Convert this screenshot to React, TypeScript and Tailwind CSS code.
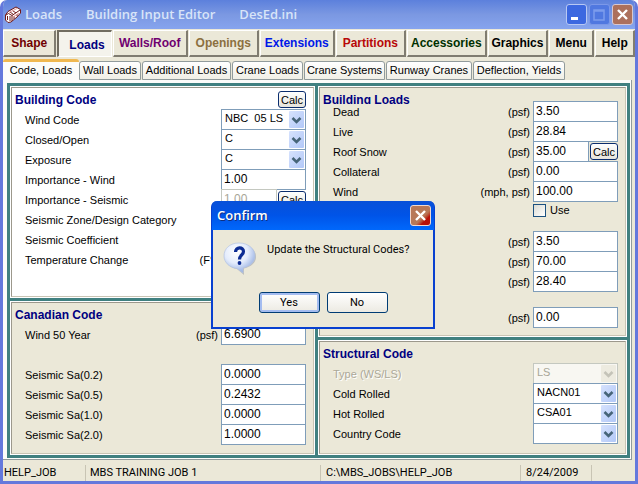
import { useId, type ReactNode } from "react";

const tools = [
  { name: "Shape", style: "basis-[54px] text-[#700000]" },
  { name: "Loads", style: "basis-[55px] text-[#000080]" },
  { name: "Walls/Roof", style: "basis-[76px] text-[#700070]" },
  { name: "Openings", style: "basis-[71px] text-[#8c7040]" },
  { name: "Extensions", style: "basis-[76px] text-[#0018e8]" },
  { name: "Partitions", style: "basis-[71px] text-[#b80808]" },
  { name: "Accessories", style: "basis-[81px] text-[#003000]" },
  { name: "Graphics", style: "basis-[61px] text-black" },
  { name: "Menu", style: "basis-[46px] text-black" },
  { name: "Help", style: "basis-[40px] text-black" },
];

const tabs = [
  { name: "Wall Loads", width: "w-[62px]" },
  { name: "Additional Loads", width: "w-[89px]" },
  { name: "Crane Loads", width: "w-[71px]" },
  { name: "Crane Systems", width: "w-[81px]" },
  { name: "Runway Cranes", width: "w-[86px]" },
  { name: "Deflection, Yields", width: "w-[92px]" },
];

function Chevron({ disabled = false }: { disabled?: boolean }) {
  return (
    <svg
      viewBox="0 0 15 17"
      className="pointer-events-none absolute top-[2px] right-[2px] h-[17px] w-[15px]"
    >
      <defs>
        <linearGradient id="arrowBlue" x1="0" y1="0" x2="1" y2="1">
          <stop offset="0" stopColor="#d6e2fd" />
          <stop offset="1" stopColor="#b2c8f8" />
        </linearGradient>
      </defs>
      <rect width="15" height="17" rx="1" fill={disabled ? "#edebe0" : "url(#arrowBlue)"} />
      <path
        d="M3.500 7 L7.500 11 L11.500 7"
        fill="none"
        stroke={disabled ? "#c4c3b8" : "#466478"}
        strokeWidth="2.6"
      />
    </svg>
  );
}

function CalcButton() {
  return (
    <button className="h-[17px] w-7 shrink-0 rounded-[3px] border border-[#0b2d6e] bg-linear-to-b from-white to-[#e6e4dc] leading-[14px]">
      Calc
    </button>
  );
}

type RowProps = {
  label?: string;
  unit?: string;
  value?: string;
  select?: boolean;
  disabled?: boolean;
  calc?: boolean;
};

function Row({ label, unit, value = "", select, disabled, calc }: RowProps) {
  const id = useId();
  const field = disabled
    ? "border-[#c4c8c0] text-[#a8a698]"
    : "border-[#7f9db9] bg-white text-black";
  return (
    <div className="flex h-5 items-start">
      <label
        htmlFor={id}
        className={`flex grow justify-between pt-[3px] pr-[3px] leading-4 whitespace-nowrap ${
          disabled && select ? "text-[#aca899] [text-shadow:1px_1px_0_#fff]" : ""
        }`}
      >
        <span>{label}</span>
        <span>{unit}</span>
      </label>
      <div className="relative flex h-[21px] w-[85px] shrink-0 items-start">
        {select ? (
          <>
            <select
              id={id}
              disabled={disabled}
              defaultValue={value}
              className={`h-[21px] w-full appearance-none border pb-[2px] pl-[3px] opacity-100 ${
                disabled ? "bg-[#f8f7f2]" : ""
              } ${field}`}
            >
              <option>{value}</option>
            </select>
            <Chevron disabled={disabled} />
          </>
        ) : (
          <input
            id={id}
            disabled={disabled}
            defaultValue={value}
            className={`h-[21px] min-w-0 grow border pb-[2px] pl-[2px] text-xs ${field}`}
          />
        )}
        {calc && (
          <div className="flex pt-[2px] pl-px">
            <CalcButton />
          </div>
        )}
      </div>
    </div>
  );
}

type PanelProps = { title: string; tone: string; clipped?: boolean; children: ReactNode };

function Panel({ title, tone, clipped, children }: PanelProps) {
  return (
    <section className={`border border-white ${tone}`}>
      <div className="h-full border border-t-[#9c988c] border-r-[#c8c4b4] border-b-[#c8c4b4] border-l-[#9c988c] pr-[7px] pl-[13px]">
        <h2
          className={`-ml-[10px] text-xs leading-6 font-bold text-[#000080] ${
            clipped ? "-mb-4 h-4 overflow-hidden" : "h-0"
          }`}
        >
          {title}
        </h2>
        {children}
      </div>
    </section>
  );
}

function TitleBar() {
  return (
    <header className="flex h-[29px] items-center bg-linear-to-b from-[#5c80dc] via-[#7b98e2] to-[#86a4ee] pr-[5px] pl-1">
      <svg viewBox="0 0 18 18" className="mr-[3px] h-[18px] w-[18px]">
        <path
          d="M1.500 9 L4 5.500 L12 1 L16.500 3.500 L16.500 7 L13 11 L7 16 L4 16.500 L1.500 14 Z"
          fill="#fff"
          stroke="#701818"
        />
        <path
          d="M2 9 L4.500 7.500 L8 9.500 L8 15 M8 9.500 L16 4 M6 6 L9.500 8.500 M8.500 4.500 L12 7 M3.500 10 L3.500 14 M6 10 L6 15 M10 10 L10 13 M13 8 L13 10"
          fill="none"
          stroke="#701818"
        />
        <path d="M5 6.500 L13 2.500 M9 11 L15 7" stroke="#e8a0a0" fill="none" />
      </svg>
      <h1 className="flex grow gap-6 font-['Open_Sans',sans-serif] text-[13px] font-semibold whitespace-nowrap text-[#d8e4f8]">
        <span>Loads</span>
        <span>Building Input Editor</span>
        <span>DesEd.ini</span>
      </h1>
      <div className="flex gap-[2px]">
        <button aria-label="Minimize" className="h-[21px] w-[21px] rounded-[3px] border border-[#b8c8f4] bg-[#3c68e0]">
          <svg viewBox="0 0 19 19">
            <rect x="4" y="12" width="7" height="3" fill="#fff" />
          </svg>
        </button>
        <button aria-label="Maximize" className="h-[21px] w-[21px] rounded-[3px] border border-[#7c98e8] bg-[#5078e0]">
          <svg viewBox="0 0 19 19">
            <path d="M4 5h10v10H4z M4 6h10" fill="none" stroke="#7c9cec" strokeWidth="1.5" />
          </svg>
        </button>
        <button aria-label="Close" className="h-[21px] w-[21px] rounded-[3px] border border-[#d8c8d0] bg-[#ac705c]">
          <svg viewBox="0 0 19 19">
            <path d="M5 5 L14 14 M14 5 L5 14" stroke="#fff" strokeWidth="2.4" />
          </svg>
        </button>
      </div>
    </header>
  );
}

function ConfirmDialog() {
  return (
    <div
      role="dialog"
      aria-labelledby="confirm-title"
      className="absolute top-[201px] left-[208px] w-[224px] rounded-t-[6px] border-2 border-t-0 border-[#0840d0] bg-[#ebe8d8]"
    >
      <div className="-mx-px flex h-[29px] items-center justify-between rounded-t-[5px] bg-linear-to-b from-[#0850d8] via-[#0054e8] to-[#0068fc] pr-[3px] pl-[5px]">
        <h2
          id="confirm-title"
          className="font-['Open_Sans',sans-serif] text-[13px] font-semibold text-white [text-shadow:1px_1px_0_#103080]"
        >
          Confirm
        </h2>
        <button aria-label="Close dialog" className="h-[21px] w-[21px] rounded-[3px] border border-[#f0d8d0] bg-linear-to-br from-[#b87858] from-60% to-[#b81008] to-75%">
          <svg viewBox="0 0 19 19">
            <path d="M5 5 L14 14 M14 5 L5 14" stroke="#fff" strokeWidth="2.4" />
          </svg>
        </button>
      </div>
      <div className="flex h-[62px] gap-[10px] pt-3 pl-[10px]">
        <svg viewBox="0 0 34 34" className="h-[34px] w-[34px] shrink-0">
          <defs>
            <radialGradient id="bubble" cx="0.4" cy="0.3" r="0.75">
              <stop offset="0" stopColor="#fff" />
              <stop offset="0.5" stopColor="#e4ecfc" />
              <stop offset="1" stopColor="#88a4dc" />
            </radialGradient>
          </defs>
          <path
            d="M17 2 C26 2 33 7.500 33 15 C33 20.500 28 25 21 26.500 L21 33 L14 27 C7 26 2 21 2 15 C2 7.500 8 2 17 2 Z"
            fill="#a0a4a8"
            opacity="0.6"
          />
          <path
            d="M16 1 C25 1 32 6.500 32 14 C32 20 27 24.500 20 26 L20 31 L14 26.500 C6 25.500 1 20 1 14 C1 6.500 7 1 16 1 Z"
            fill="url(#bubble)"
            stroke="#b4c4e4"
            strokeWidth="0.7"
          />
          <path
            d="M12.500 10 C12.500 4.500 20.500 4.500 20.500 9.500 C20.500 13 16.500 13 16.500 17.500"
            fill="none"
            stroke="#0c2c94"
            strokeWidth="3.2"
          />
          <circle cx="16.500" cy="21" r="1.900" fill="#0c2c94" />
        </svg>
        <p className="font-[Roboto,sans-serif] leading-4 whitespace-nowrap">
          Update the Structural Codes?
        </p>
      </div>
      <div className="flex h-[35px] justify-center gap-[7px] font-[Roboto,sans-serif]">
        <button className="h-[21px] w-[61px] rounded-[3px] border border-[#003c74] bg-linear-to-b from-white to-[#eceae2] leading-[17px] inset-ring-2 inset-ring-[#a4bcf0]">
          Yes
        </button>
        <button className="h-[21px] w-[61px] rounded-[3px] border border-[#003c74] bg-linear-to-b from-white to-[#eceae2] leading-[17px]">
          No
        </button>
      </div>
    </div>
  );
}

export default function App() {
  return (
    <div className="relative min-h-screen overflow-hidden rounded-t-[7px] border-x-[3px] border-b-[3px] border-[#6478dc] bg-[#ebe8d8] font-['Liberation_Sans',Arial,sans-serif] text-[11px] text-black">
      <div className="-mx-[3px]">
        <TitleBar />
      </div>

      <nav className="flex h-[28px] gap-px pt-px">
        {tools.map((tool) =>
          tool.name === "Loads" ? (
            <button
              key={tool.name}
              aria-pressed="true"
              className={`grow border-t-2 border-r border-b border-l-2 border-t-[#706c60] border-r-white border-b-white border-l-[#706c60] bg-[#f4f3ec] pt-px pl-1 text-xs leading-4 font-bold ${tool.style}`}
            >
              {tool.name}
            </button>
          ) : (
            <button
              key={tool.name}
              className={`grow border-t border-r-2 border-b-2 border-l border-t-white border-r-[#807c70] border-b-[#807c70] border-l-white text-xs leading-4 font-bold ${tool.style}`}
            >
              {tool.name}
            </button>
          ),
        )}
      </nav>

      <div role="tablist" className="flex h-[23px] items-end pt-[2px]">
        <button
          role="tab"
          aria-selected="true"
          className="h-[21px] w-[76px] rounded-t-[3px] border-t-[3px] border-[#f0b850] bg-[#fcfcfa] pb-[2px] leading-4 whitespace-nowrap"
        >
          Code, Loads
        </button>
        {tabs.map((tab) => (
          <button
            key={tab.name}
            role="tab"
            aria-selected="false"
            className={`mr-px h-[19px] rounded-t-[3px] border border-[#919b9c] bg-linear-to-b from-white to-[#f0efe6] leading-[17px] whitespace-nowrap ${tab.width}`}
          >
            {tab.name}
          </button>
        ))}
      </div>

      <main className="mr-[3px] border-r border-b border-[#919b9c] bg-[#fcfcfa] pt-[3px] pr-px pb-px pl-1">
        <div className="grid grid-cols-[305fr_309fr] gap-[3px] bg-[#408080] p-[3px]">
          <div className="grid grid-rows-[212px_154px] gap-[3px]">
            <Panel title="Building Code" tone="bg-white">
              <div className="flex h-[21px] justify-end pt-[3px]">
                <CalcButton />
              </div>
              <Row label="Wind Code" value={"NBC\u00a0 05 LS"} select />
              <Row label="Closed/Open" value="C" select />
              <Row label="Exposure" value="C" select />
              <Row label="Importance - Wind" value="1.00" />
              <Row label="Importance - Seismic" value="1.00" disabled calc />
              <Row label="Seismic Zone/Design Category" />
              <Row label="Seismic Coefficient" />
              <Row label="Temperature Change" unit="(F°)" />
            </Panel>
            <Panel title="Canadian Code" tone="bg-[#ebe8d8]">
              <div className="pt-[21px]">
                <Row label="Wind 50 Year" unit="(psf)" value="6.6900" />
              </div>
              <div className="pt-5">
                <Row label="Seismic Sa(0.2)" value="0.0000" />
                <Row label="Seismic Sa(0.5)" value="0.2432" />
                <Row label="Seismic Sa(1.0)" value="0.0000" />
                <Row label="Seismic Sa(2.0)" value="1.0000" />
              </div>
            </Panel>
          </div>
          <div className="grid grid-rows-[251px_115px] gap-[3px]">
            <Panel title="Building Loads" tone="bg-[#ebe8d8]" clipped>
              <div className="pt-[13px]">
                <Row label="Dead" unit="(psf)" value="3.50" />
                <Row label="Live" unit="(psf)" value="28.84" />
                <Row label="Roof Snow" unit="(psf)" value="35.00" calc />
                <Row label="Collateral" unit="(psf)" value="0.00" />
                <Row label="Wind" unit="(mph, psf)" value="100.00" />
              </div>
              <div className="flex h-[30px] justify-end pt-[3px]">
                <label className="flex h-[13px] w-[85px] items-center gap-1">
                  <input
                    type="checkbox"
                    className="h-[13px] w-[13px] appearance-none border border-[#1c5180] bg-linear-to-br from-[#dcdcd4] to-white"
                  />
                  Use
                </label>
              </div>
              <Row unit="(psf)" value="3.50" />
              <Row unit="(psf)" value="70.00" />
              <Row unit="(psf)" value="28.40" />
              <div className="pt-4">
                <Row unit="(psf)" value="0.00" />
              </div>
            </Panel>
            <Panel title="Structural Code" tone="bg-[#ebe8d8]">
              <div className="pt-[21px]">
                <Row label="Type (WS/LS)" value="LS" select disabled />
                <Row label="Cold Rolled" value="NACN01" select />
                <Row label="Hot Rolled" value="CSA01" select />
                <Row label="Country Code" select />
              </div>
            </Panel>
          </div>
        </div>
      </main>

      <footer className="flex h-[21px] items-end gap-[3px] pl-px font-[Roboto,sans-serif] leading-4 whitespace-nowrap">
        <span className="w-[82px] border-r border-[#c8c4b4]">HELP_JOB</span>
        <span className="w-[232px] border-r border-[#c8c4b4] pl-px">MBS TRAINING JOB 1</span>
        <span className="grow border-r border-[#c8c4b4] pl-[2px]">C:\MBS_JOBS\HELP_JOB</span>
        <span className="w-[68px] border-r border-[#c8c4b4] pl-[2px]">8/24/2009</span>
        <span className="w-10" />
      </footer>

      <ConfirmDialog />
    </div>
  );
}
